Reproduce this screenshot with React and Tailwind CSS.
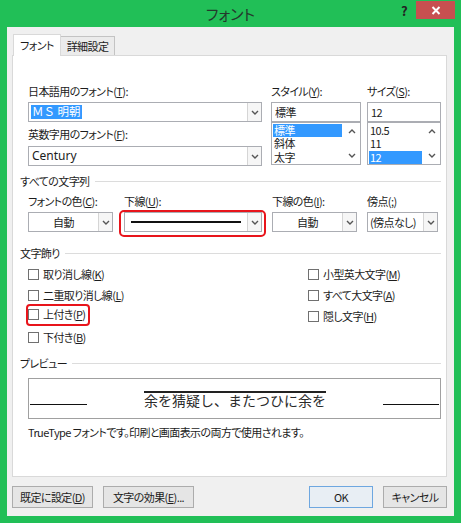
import React from 'react';

const Chevron = ({ up = false }) => (
  <svg width="8" height="5" viewBox="0 0 8 5">
    <path d={up ? 'M1 4l3-3 3 3' : 'M1 1l3 3 3-3'} stroke="#555" strokeWidth="1.4" fill="none" />
  </svg>
);

const Combo = ({ children, center = false }) => (
  <div className="flex h-[20px] border border-[#abadb3] bg-white">
    <div
      className={`flex-1 flex items-center px-[2px] whitespace-nowrap ${center ? 'justify-center' : ''}`}
    >
      {children}
    </div>
    <div className="w-[14px] flex items-center justify-center border-l border-[#d5d5d5] bg-[#f6f6f6]">
      <Chevron />
    </div>
  </div>
);

const ListBox = ({ items, selected }) => (
  <div className="flex h-[43px] border border-[#abadb3] bg-white">
    <div className="flex-1 flex flex-col px-[1px] pt-[1px]">
      {items.map((it) => (
        <div
          key={it}
          className={`h-[13.5px] flex items-center px-[1px] ${it === selected ? 'bg-[#3399ff] text-white' : ''}`}
        >
          {it}
        </div>
      ))}
    </div>
    <div className="w-[17px] flex flex-col items-center justify-between py-[6px]">
      <Chevron up />
      <Chevron />
    </div>
  </div>
);

const Section = ({ title }) => (
  <div className="flex items-center h-[18px] pr-[5px]">
    <span>{title}</span>
    <div className="flex-1 h-px bg-[#dcdcdc] ml-[5px]" />
  </div>
);

const Check = ({ label, k, boxed = false }) => {
  const inner = (
    <div className="flex items-center gap-[4px]">
      <span className="w-[11px] h-[11px] border border-[#707070] bg-white" />
      <span>
        {label}(<u>{k}</u>)
      </span>
    </div>
  );
  return (
    <div className="flex items-center h-[21px]">
      {boxed ? (
        <div className="flex items-center h-[22px] mb-[4px] -ml-[2px] pr-[3px] border-2 border-[#e8141b] rounded-[4px]">
          {inner}
        </div>
      ) : (
        inner
      )}
    </div>
  );
};

const Btn = ({ children, w, primary = false }) => (
  <div
    className={`${w} h-[22px] flex items-center justify-center border ${
      primary ? 'border-[#6ea7e0] bg-[#e8eef4]' : 'border-[#acacac] bg-[#e5e5e5]'
    }`}
  >
    {children}
  </div>
);

export default function App() {
  return (
    <div className="w-[461px] h-[523px] bg-[#21bf57] flex flex-col px-[7px] pb-[7px] font-['Noto_Sans_CJK_JP',sans-serif] [font-feature-settings:'palt'] text-[11px] tracking-[-0.6px] text-[#1c1c1c] leading-none">
      {/* title bar */}
      <div className="h-[27px] -mx-[7px] grid grid-cols-[1fr_auto_1fr]">
        <div />
        <div className="flex items-center text-[15px] tracking-normal text-[#24382c]">フォント</div>
        <div className="flex justify-end items-start pr-[6px] pt-[1px]">
          <div className="h-[18px] flex items-center mr-[9px] font-bold text-[13px] text-[#222]">?</div>
          <div className="w-[39px] h-[18px] bg-[#c75050] flex items-center justify-center">
            <svg width="10" height="9" viewBox="0 0 10 9">
              <path d="M1.5 1l7 7M8.5 1l-7 7" stroke="#fff" strokeWidth="2" />
            </svg>
          </div>
        </div>
      </div>

      <div className="flex-1 bg-[#f0f0f0] pl-[5px] pt-[7px] flex flex-col">
        {/* tabs */}
        <div className="flex items-end h-[21px]">
          <div className="relative z-10 ml-[1px] w-[48px] h-[22px] -mb-px border border-b-0 border-[#d9d9d9] bg-white flex items-center justify-center">
            フォント
          </div>
          <div className="w-[55px] h-[19px] -ml-px border border-b-0 border-[#c3c3c3] bg-[#ebebeb] flex items-center justify-center">
            詳細設定
          </div>
        </div>

        {/* panel */}
        <div className="w-[435px] h-[422px] border border-[#d9d9d9] bg-white flex flex-col pl-[7px]">
          <div className="flex pl-[8px] pt-[25px]">
            <div className="w-[234px] flex flex-col">
              <div className="h-[21px] flex items-center">
                日本語用のフォント(<u>T</u>):
              </div>
              <Combo>
                <span className="bg-[#3399ff] text-white px-[1px] h-[14px] flex items-center text-[11.5px] tracking-normal [font-feature-settings:normal]">
                  ＭＳ 明朝
                </span>
              </Combo>
              <div className="h-[24px] flex items-center">
                英数字用のフォント(<u>F</u>):
              </div>
              <Combo>
                <span className="pl-[1px] text-[12px] tracking-normal font-['Segoe_UI','Noto_Sans',sans-serif]">
                  Century
                </span>
              </Combo>
            </div>
            <div className="w-[90px] ml-[9px] flex flex-col">
              <div className="h-[21px] flex items-center">
                スタイル(<u>Y</u>):
              </div>
              <div className="h-[20px] border border-[#abadb3] bg-white flex items-center px-[3px]">標準</div>
              <ListBox items={['標準', '斜体', '太字']} selected="標準" />
            </div>
            <div className="w-[74px] ml-[6px] flex flex-col">
              <div className="h-[21px] flex items-center">
                サイズ(<u>S</u>):
              </div>
              <div className="h-[20px] border border-[#abadb3] bg-white flex items-center px-[3px]">12</div>
              <ListBox items={['10.5', '11', '12']} selected="12" />
            </div>
          </div>

          <div className="mt-[6px]">
            <Section title="すべての文字列" />
          </div>
          <div className="flex pl-[8px] mt-[2px]">
            <div className="w-[85px] flex flex-col">
              <div className="h-[18px] flex items-center">
                フォントの色(<u>C</u>):
              </div>
              <div className="mt-[2px]">
                <Combo center>自動</Combo>
              </div>
            </div>
            <div className="w-[138px] ml-[11px] flex flex-col">
              <div className="h-[18px] flex items-center">
                下線(<u>U</u>):
              </div>
              <div className="mt-[2px] h-[20px]">
                <div className="-ml-[5px] -mr-[4px] -mt-[2px] pl-[3px] pr-[2px] pb-[3px] border-2 border-[#e8141b] rounded-[5px]">
                  <Combo>
                    <div className="flex-1 mx-[4px] h-[2px] bg-[#111]" />
                  </Combo>
                </div>
              </div>
            </div>
            <div className="w-[85px] ml-[10px] flex flex-col">
              <div className="h-[18px] flex items-center">
                下線の色(<u>I</u>):
              </div>
              <div className="mt-[2px]">
                <Combo center>自動</Combo>
              </div>
            </div>
            <div className="w-[71px] ml-[10px] flex flex-col">
              <div className="h-[18px] flex items-center">
                傍点(<u>;</u>)
              </div>
              <div className="mt-[2px]">
                <Combo>(傍点なし)</Combo>
              </div>
            </div>
          </div>

          <div className="mt-[12px]">
            <Section title="文字飾り" />
          </div>
          <div className="flex pl-[8px] mt-[2px]">
            <div className="w-[280px] flex flex-col">
              <Check label="取り消し線" k="K" />
              <Check label="二重取り消し線" k="L" />
              <Check label="上付き" k="P" boxed />
              <Check label="下付き" k="B" />
            </div>
            <div className="flex flex-col">
              <Check label="小型英大文字" k="M" />
              <Check label="すべて大文字" k="A" />
              <Check label="隠し文字" k="H" />
            </div>
          </div>

          <div className="mt-[6px]">
            <Section title="プレビュー" />
          </div>
          <div className="ml-[8px] mt-[6px] w-[413px] h-[41px] border border-[#a0a0a0] bg-white flex items-center">
            <div className="w-[57px] ml-[1px] h-px bg-[#111] mt-[12px]" />
            <div className="flex-1 flex justify-center">
              <span className="text-[14px] tracking-normal leading-[12px] text-[#2a2a2a] border-t-2 border-[#222] pt-[1px] [font-feature-settings:normal]">
                余を猜疑し、またつひに余を
              </span>
            </div>
            <div className="w-[56px] mr-[1px] h-px bg-[#111] mt-[12px]" />
          </div>
          <div className="ml-[8px] mt-[5px] h-[16px] flex items-center">
            TrueType フォントです。印刷と画面表示の両方で使用されます。
          </div>
        </div>

        {/* buttons */}
        <div className="flex mt-[9px]">
          <Btn w="w-[81px]">
            既定に設定(<u>D</u>)
          </Btn>
          <div className="ml-[10px]">
            <Btn w="w-[91px]">
              文字の効果(<u>E</u>)...
            </Btn>
          </div>
          <div className="ml-[115px]">
            <Btn w="w-[64px]" primary>
              OK
            </Btn>
          </div>
          <div className="ml-[10px]">
            <Btn w="w-[64px]">キャンセル</Btn>
          </div>
        </div>
      </div>
    </div>
  );
}
